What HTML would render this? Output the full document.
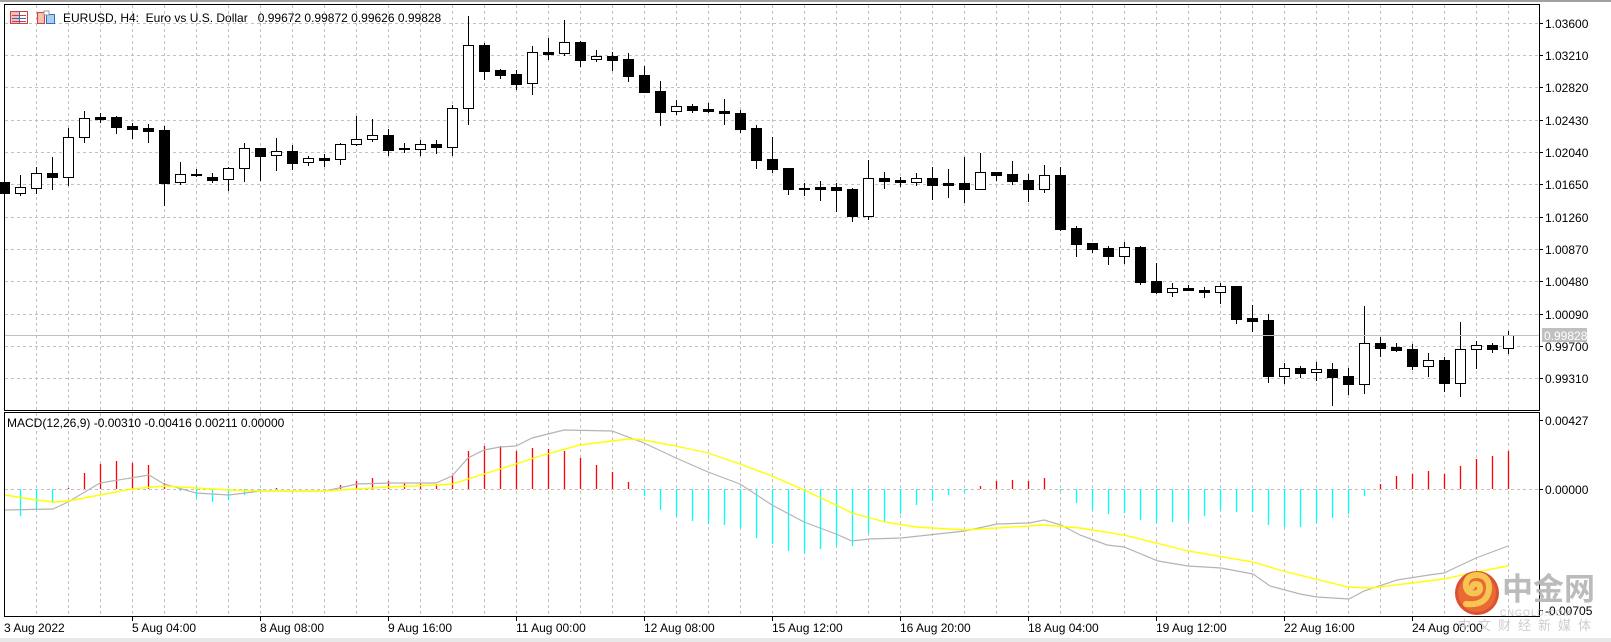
<!DOCTYPE html>
<html><head><meta charset="utf-8"><style>
html,body{margin:0;padding:0;background:#fff;width:1611px;height:642px;overflow:hidden}
svg{display:block}
text{font-family:"Liberation Sans","Noto Sans CJK SC",sans-serif;font-size:12px;fill:#000}
.pre{white-space:pre}
</style></head><body>
<svg id="s" width="1611" height="642" viewBox="0 0 1611 642" xmlns="http://www.w3.org/2000/svg">
<rect x="0" y="0" width="1611" height="642" fill="#fff"/>
<rect x="0" y="0" width="1611" height="2" fill="#a0a0a0"/>
<rect x="0" y="638" width="1611" height="4" fill="#e8e8e8"/>
<g id="grid"></g>
<g id="macd"></g>
<g id="cand"></g>
<line x1="5" y1="335.5" x2="1539" y2="335.5" stroke="#c0c0c0" stroke-width="1"/>
<rect x="4.5" y="4.5" width="1535" height="406" fill="none" stroke="#000"/>
<rect x="4.5" y="412.5" width="1535" height="204" fill="none" stroke="#000"/>
<g id="axis"></g>
<rect x="1542" y="328" width="45" height="14" fill="#c0c0c0"/>
<text x="1544" y="340" style="fill:#fff">0.99828</text>
<g>
<rect x="10.5" y="11.5" width="17" height="12" fill="#fff" stroke="#d04040"/>
<rect x="11" y="12" width="8" height="11" fill="#f0c0c0"/>
<line x1="12" y1="15.5" x2="26" y2="15.5" stroke="#d04040"/><line x1="12" y1="18.5" x2="26" y2="18.5" stroke="#3070c0"/><line x1="12" y1="21.5" x2="26" y2="21.5" stroke="#d04040"/>
<line x1="19.5" y1="12" x2="19.5" y2="23" stroke="#3070c0"/>
<rect x="37.5" y="12.5" width="7" height="11" fill="#f8c0b0" stroke="#d04040"/>
<rect x="46.5" y="14.5" width="8" height="9" fill="#a8d0f0" stroke="#3070c0"/>
<rect x="44" y="11" width="5" height="4" fill="#fff" stroke="#999"/>
</g>
<text class="pre" x="63" y="22" xml:space="preserve">EURUSD, H4:  Euro vs U.S. Dollar   0.99672 0.99872 0.99626 0.99828</text>
<text class="pre" x="7" y="427">MACD(12,26,9) -0.00310 -0.00416 0.00211 0.00000</text>
<g id="time"></g>
<g opacity="0.9">
<circle cx="1477" cy="593" r="22" fill="#d8401c"/>
<circle cx="1477" cy="593" r="19" fill="#e85a20"/>
<path d="M1466 604 Q1488 606 1489 588 Q1489 575 1476 575 Q1465 576 1466 587 Q1468 595 1477 593 Q1482 590 1479 585 Q1474 582 1472 587" fill="none" stroke="#f7c040" stroke-width="6" stroke-linecap="round"/>
<text x="1502" y="600" style="font-size:31px;font-weight:bold;fill:#b4b4b4;font-family:'Noto Sans CJK SC',sans-serif">中金网</text>
<text x="1500" y="616" style="font-size:9px;fill:#c0c0c0;letter-spacing:1px">CNGOLD.COM</text>
<text x="1458" y="630" style="font-size:13px;fill:#c8c8c8;letter-spacing:7px;font-family:'Noto Sans CJK SC',sans-serif">中文财经新媒体</text>
</g>
</svg>
<script>
var NS="http://www.w3.org/2000/svg";
function el(p,t,a){var e=document.createElementNS(NS,t);for(var k in a)e.setAttribute(k,a[k]);p.appendChild(e);return e;}
var g=document.getElementById('grid');
for(var x=36;x<1539;x+=32){
 el(g,'line',{x1:x+.5,y1:5,x2:x+.5,y2:410,stroke:'#c0c0c0','stroke-dasharray':'3,3'});
 el(g,'line',{x1:x+.5,y1:413,x2:x+.5,y2:616,stroke:'#c0c0c0','stroke-dasharray':'3,3'});
}
var ax=document.getElementById('axis');
var labs=["1.03600","1.03210","1.02820","1.02430","1.02040","1.01650","1.01260","1.00870","1.00480","1.00090","0.99700","0.99310"];
for(var k=0;k<12;k++){var y=Math.round(22.5+k*32.35)+.5;
 el(g,'line',{x1:5,y1:y,x2:1539,y2:y,stroke:'#c0c0c0','stroke-dasharray':'3,3'});
 el(ax,'line',{x1:1539,y1:y,x2:1543,y2:y,stroke:'#000'});
 var t=el(ax,'text',{x:1545,y:y+4.5});t.textContent=labs[k];
}
el(g,'line',{x1:5,y1:489.5,x2:1539,y2:489.5,stroke:'#c0c0c0','stroke-dasharray':'3,3'});
[[420.5,"0.00427"],[489.5,"0.00000"],[610.5,"-0.00705"]].forEach(function(a){
 el(ax,'line',{x1:1539,y1:a[0],x2:1543,y2:a[0],stroke:'#000'});
 var t=el(ax,'text',{x:1545,y:a[0]+4.5});t.textContent=a[1];});
var C=[
['b',182,193,182,193],['w',187,193,175,195],['w',173,188,167,193],['b',173,177,157,189],['w',137,177,128,185],
['w',118,137,111,142],['b',117,119,113,122],['b',117,127,116,133],['b',126,129,123,138],['b',128,131,124,142],
['b',130,183,126,205],['w',174,182,162,184],['d',174,175,169,176],['b',177,180,173,182],['w',168,179,167,190],
['w',148,168,143,181],['b',148,156,148,180],['w',151,155,138,170],['b',151,163,145,169],['w',158,162,156,165],
['b',158,160,154,166],['w',144,159,143,164],['w',139,144,116,145],['w',135,139,119,141],['b',135,150,129,155],
['d',148,149,143,152],['w',144,149,140,155],['b',144,147,140,153],['w',108,147,105,155],['w',45,108,16,124],
['b',45,71,43,79],['b',70,75,69,78],['b',74,84,70,89],['w',52,83,46,94],['b',52,54,38,59],
['w',42,53,20,55],['b',42,60,41,66],['w',56,59,50,61],['b',56,60,52,70],['b',59,76,53,81],
['b',75,92,66,92],['b',91,112,81,125],['w',106,111,100,114],['b',106,110,104,112],['b',109,111,103,112],
['b',111,113,99,124],['b',113,129,110,132],['b',128,160,125,168],['b',159,169,137,172],['b',168,189,168,194],
['d',188,188,183,195],['b',187,189,181,200],['b',187,190,183,211],['b',189,216,188,221],['w',178,216,160,219],
['b',178,181,172,188],['b',180,182,177,186],['w',178,182,173,185],['b',178,185,167,199],['b',183,185,169,197],
['b',183,189,157,202],['w',172,189,153,189],['b',172,175,172,180],['b',174,181,161,184],['b',180,189,174,201],
['w',175,189,165,192],['b',175,229,167,230],['b',228,244,226,256],['b',243,249,243,252],['b',248,256,246,264],
['w',247,256,242,263],['b',247,282,246,284],['b',281,292,263,293],['w',288,292,283,296],['b',288,290,285,290],
['b',290,292,287,297],['w',286,292,283,303],['b',286,319,286,323],['b',318,321,305,331],['b',320,376,314,382],
['w',368,376,363,383],['b',368,373,366,377],['w',369,372,362,380],['b',369,377,363,405],['b',376,384,368,394],
['w',343,384,306,393],['b',343,348,337,356],['b',347,350,343,351],['b',349,366,344,369],['w',360,366,353,376],
['b',360,383,357,391],['w',349,383,322,396],['w',345,349,341,368],['b',345,349,343,352],['w',335,348,331,353]];
var cg=document.getElementById('cand');
C.forEach(function(c,i){var cx=4+16*i;var w=cx+.5;
 el(cg,'line',{x1:w,y1:c[3],x2:w,y2:c[4]+1,stroke:'#000'});
 if(c[0]=='d'||c[2]-c[1]<2){el(cg,'rect',{x:cx-5,y:c[1],width:11,height:Math.max(2,c[2]-c[1]),fill:'#000'});}
 else if(c[0]=='b'){el(cg,'rect',{x:cx-5,y:c[1],width:11,height:c[2]-c[1]+1,fill:'#000'});}
 else{el(cg,'rect',{x:cx-4.5,y:c[1]+.5,width:10,height:c[2]-c[1],fill:'#fff',stroke:'#000'});}
});
var H=[0,-27,-20,-14,1,16,25,28,26,24,6,-2,-9,-13,-11,-6,-3,1,0,0,0,4,8,11,8,6,6,5,14,38,43,43,38,41,40,
38,31,24,17,7,-7,-21,-27,-32,-35,-36,-39,-49,-55,-62,-64,-60,-57,-57,-44,-33,-25,-16,-12,-6,-4,3,8,9,8,11,-2,-14,-21,
-25,-24,-31,-34,-33,-32,-27,-21,-23,-23,-36,-38,-38,-34,-29,-25,-7,5,13,15,18,15,23,30,33,38];
var mg=document.getElementById('macd');
H.forEach(function(h,i){if(i==0||h==0)return;var x=4+16*i+.5;
 el(mg,'line',{x1:x,y1:489,x2:x,y2:489-h,stroke:h>0?'#ff0000':'#00ffff','stroke-width':1.3});});
var gray="5,510 53,509 68,502 100,483 149,475 164,484 196,493 229,495 261,491 325,491 357,484 389,483 436,483 452,476 468,458 484,450 500,447 516,446 532,438 560,431 564,430 612,431 644,443 676,458 708,472 740,484 772,505 804,522 836,534 852,541 869,539 901,538 965,531 997,524 1029,523 1044,520 1061,525 1080,535 1107,545 1124,547 1158,561 1188,566 1221,568 1253,574 1270,586 1300,594 1317,597 1349,599 1364,591 1397,580 1429,575 1444,573 1476,558 1508,546";
var yel="5,495 36,500 54,502 68,501 100,495 132,489 164,486 196,488 229,490 261,491 325,491 357,489 389,487 436,485 452,484 484,474 516,464 540,456 580,445 612,441 628,439 644,440 676,446 708,453 740,464 772,476 804,490 836,505 852,513 885,522 916,527 965,530 997,528 1044,525 1080,528 1124,535 1188,551 1253,562 1283,571 1348,587 1371,588 1412,583 1444,579 1476,572 1508,566";
el(mg,'polyline',{points:gray,fill:'none',stroke:'#b4b4b4','stroke-width':1.2});
el(mg,'polyline',{points:yel,fill:'none',stroke:'#ffff00','stroke-width':1.4});
var tl=["3 Aug 2022","5 Aug 04:00","8 Aug 08:00","9 Aug 16:00","11 Aug 00:00","12 Aug 08:00","15 Aug 12:00","16 Aug 20:00","18 Aug 04:00","19 Aug 12:00","22 Aug 16:00","24 Aug 00:00"];
var tg=document.getElementById('time');
tl.forEach(function(s,k){var x=4+128*k;
 if(k>0)el(tg,'line',{x1:x+.5,y1:616,x2:x+.5,y2:621,stroke:'#000'});
 var t=el(tg,'text',{x:x,y:632});t.textContent=s;});
</script>
</body></html>
